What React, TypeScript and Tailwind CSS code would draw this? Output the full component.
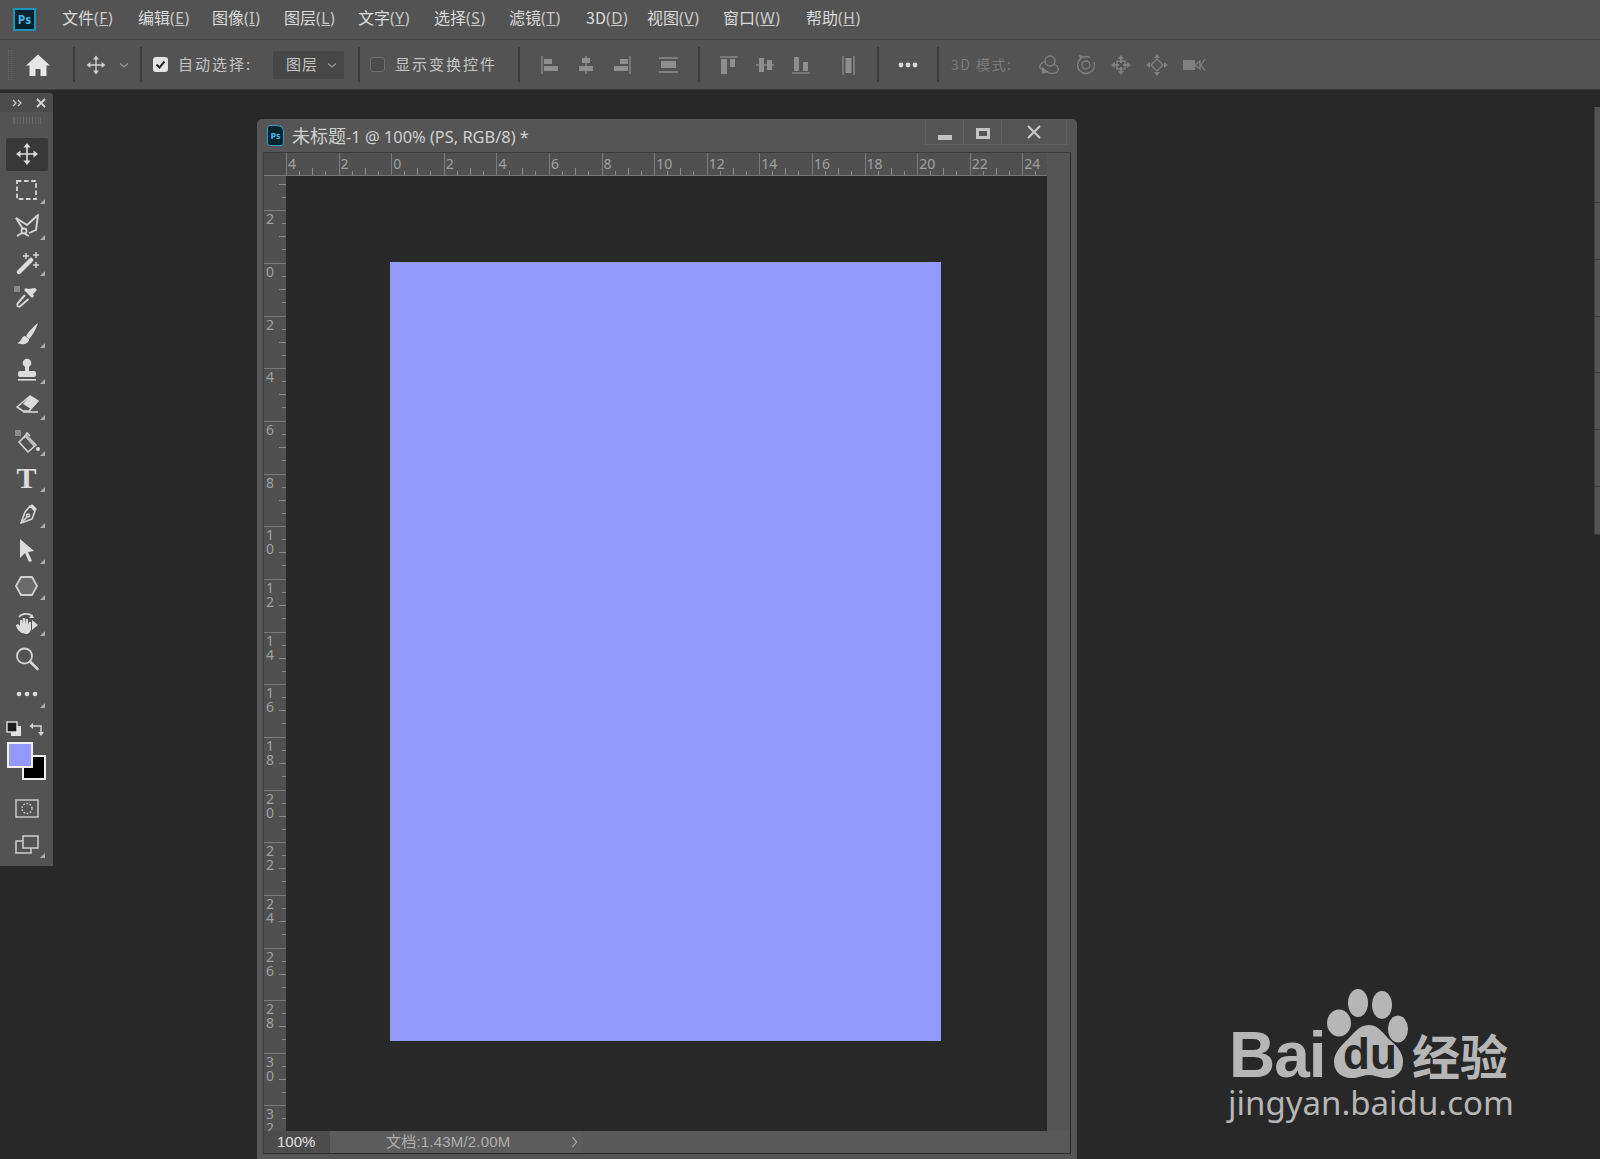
import React from "react";

const CJK = { fontFamily: '"Noto Sans CJK SC","Noto Sans",sans-serif' };
const LAT = { fontFamily: '"Noto Sans","Noto Sans CJK SC",sans-serif' };

const menus: [string, string, string][] = [
  ["文件", "F", "w-[76px]"],
  ["编辑", "E", "w-[74px]"],
  ["图像", "I", "w-[72px]"],
  ["图层", "L", "w-[74px]"],
  ["文字", "Y", "w-[76px]"],
  ["选择", "S", "w-[75px]"],
  ["滤镜", "T", "w-[77px]"],
  ["3D", "D", "w-[61px]"],
  ["视图", "V", "w-[76px]"],
  ["窗口", "W", "w-[83px]"],
  ["帮助", "H", "w-[70px]"],
];

const Ico = ({ children, s = 28, c = "#d6d6d6" }: { children: React.ReactNode; s?: number; c?: string }) => (
  <svg width={s} height={s} viewBox={`0 0 ${s} ${s}`} fill="none" stroke={c} strokeWidth={1.6} className="block shrink-0">
    {children}
  </svg>
);

const MoveGlyph = ({ c = "#dcdcdc" }: { c?: string }) => (
  <g>
    <path d="M14 6v16M6 14h16" stroke={c} strokeWidth={1.6} />
    <path d="M14 3l3.5 4.5h-7zM14 25l3.5-4.5h-7zM3 14l4.5-3.5v7zM25 14l-4.5-3.5v7z" fill={c} stroke="none" />
  </g>
);

const tools: { el: React.ReactNode; tri: boolean }[] = [
  { tri: false, el: <Ico><MoveGlyph /></Ico> },
  { tri: true, el: <Ico><rect x="4" y="5" width="19" height="18" strokeDasharray="4.500 2.600" strokeWidth={1.8} /></Ico> },
  { tri: true, el: <Ico><path d="M3 6l11 7L25 3l-2 15-7 3" strokeLinejoin="round" strokeWidth={1.900} /><path d="M3 6l7 11" strokeWidth={1.900} /><circle cx="11" cy="19" r="2.500" strokeWidth={1.800} /><path d="M9 21l-5 3M12 22l4 2" strokeWidth={1.800} /></Ico> },
  { tri: true, el: <Ico><path d="M6 24L18 12" stroke="#dcdcdc" strokeWidth={4.500} strokeLinecap="round" /><path d="M13 5v6M10 8h6M23 4v6M20 7h6M23 14v6M20 17h6" strokeWidth={1.500} /></Ico> },
  { tri: false, el: <Ico><path d="M24 4l2 2-4 4 1 2-2 2-8-8 2-2 2 1z" fill="#dcdcdc" stroke="none" transform="translate(-2 0)" /><path d="M12 11l-7 8c-2 2 0 5 2.500 3l8-7" strokeWidth={1.900} /><rect x="1" y="2" width="6" height="6" fill="#8a8a8a" stroke="none" /></Ico> },
  { tri: true, el: <Ico><path d="M25 3c-4 3-9 8-12 13l3 3c4-4 7-10 9-16z" fill="#dcdcdc" stroke="none" /><path d="M12 16c-4 0-3 6-8 7 4 2 12 2 12-4z" fill="#dcdcdc" stroke="none" /></Ico> },
  { tri: true, el: <Ico><circle cx="14" cy="7" r="4.300" fill="#dcdcdc" stroke="none" /><rect x="12" y="10" width="4" height="6" fill="#dcdcdc" stroke="none" /><rect x="5" y="15" width="18" height="6" rx="2" fill="#dcdcdc" stroke="none" /><rect x="5" y="23" width="18" height="1.600" fill="#dcdcdc" stroke="none" /></Ico> },
  { tri: true, el: <Ico><path d="M17 4l8 5-9 10H10l-6-4z" strokeLinejoin="round" /><path d="M17 4l8 5-7 8-8-5z" fill="#dcdcdc" stroke="none" /><path d="M10 20h15" /></Ico> },
  { tri: true, el: <Ico><path d="M13 7l10 10-8 7-9-10z" strokeLinejoin="round" /><path d="M11 10l3-5 3 3" /><path d="M13 7l10 10-2 2-9-10z" fill="#bbb" stroke="none" /><circle cx="25" cy="21" r="2" fill="#dcdcdc" stroke="none" /><rect x="2" y="2" width="6" height="6" fill="#8a8a8a" stroke="none" /></Ico> },
  { tri: true, el: <span className="block w-[28px] text-center text-[30px] leading-[28px] font-bold text-[#dcdcdc]" style={{ fontFamily: '"Liberation Serif",serif' }}>T</span> },
  { tri: true, el: <Ico><path d="M17 6l5 5-3 8-11 4 4-11z" strokeLinejoin="round" /><path d="M19 4l5 5-2 2-5-5z" fill="#dcdcdc" stroke="none" /><path d="M8 23l6-6" /><circle cx="15" cy="15.500" r="1.500" /></Ico> },
  { tri: true, el: <Ico><path d="M7 3l14 12-6 1 4 9-3 1-4-9-5 5z" fill="#dcdcdc" stroke="none" /></Ico> },
  { tri: true, el: <Ico><path d="M8 5h11l5 9-5 9H8l-5-9z" fill="#6b6b6b" stroke="#cfcfcf" strokeWidth={1.800} /></Ico> },
  { tri: true, el: <Ico><path d="M6 9c3-4 10-4 13-1" /><path d="M21 10l-5 0 3-4z" fill="#dcdcdc" stroke="none" /><path d="M19 12l6 5-6 5z" fill="#dcdcdc" stroke="none" /><path d="M9 25c-3-1-6-6-6-8l2-1 2 2v-6h2v4l1-6h2v6l1-5h2v6l1-3h2v7c0 3-3 5-5 5z" fill="#dcdcdc" stroke="none" /></Ico> },
  { tri: false, el: <Ico><circle cx="11.500" cy="12" r="7.500" strokeWidth={1.800} /><path d="M17 17.500L24.500 25" strokeWidth={2.600} strokeLinecap="round" /></Ico> },
  { tri: true, el: <Ico><circle cx="6" cy="14" r="2.300" fill="#dcdcdc" stroke="none" /><circle cx="14" cy="14" r="2.300" fill="#dcdcdc" stroke="none" /><circle cx="22" cy="14" r="2.300" fill="#dcdcdc" stroke="none" /></Ico> },
];

const G = "#8e8e8e";
const alignIcons: [React.ReactNode, string][] = [
  [<><path d="M4 3v18" /><rect x="6" y="6" width="8" height="5" fill={G} stroke="none" /><rect x="6" y="13" width="14" height="5" fill={G} stroke="none" /></>, "ml-[18px]"],
  [<><path d="M12 3v18" /><rect x="8" y="5" width="8" height="5" fill={G} stroke="none" /><rect x="5" y="13" width="14" height="5" fill={G} stroke="none" /></>, "ml-[12px]"],
  [<><path d="M20 3v18" /><rect x="10" y="6" width="8" height="5" fill={G} stroke="none" /><rect x="4" y="13" width="14" height="5" fill={G} stroke="none" /></>, "ml-[12px]"],
  [<><path d="M2 5h19M2 19h19" /><rect x="4" y="8" width="15" height="7" fill={G} stroke="none" /></>, "ml-[23px]"],
];
const alignIcons2: [React.ReactNode, string][] = [
  [<><path d="M3 4h18" /><rect x="4" y="6" width="6" height="15" fill={G} stroke="none" /><rect x="13" y="6" width="5" height="8" fill={G} stroke="none" /></>, "ml-[17px]"],
  [<><path d="M3 12h18" /><rect x="6" y="5" width="5" height="14" fill={G} stroke="none" /><rect x="14" y="7" width="5" height="10" fill={G} stroke="none" /></>, "ml-[12px]"],
  [<><path d="M3 20h18" /><rect x="5" y="4" width="5" height="14" fill={G} stroke="none" /><rect x="14" y="9" width="5" height="9" fill={G} stroke="none" /></>, "ml-[12px]"],
  [<><path d="M7 3v19M18 3v19" /><rect x="9.500" y="5" width="6" height="15" fill={G} stroke="none" /></>, "ml-[23px]"],
];

const D = "#808080";
const icons3d: [React.ReactNode, string][] = [
  [<><circle cx="13" cy="8" r="5" /><path d="M9 8c-4 1-7 4-6 7l4 3M10 19c3 2 9 2 11-1 1-3-1-6-4-7" /><path d="M5 14l7 5-7 2z" fill={D} stroke="none" /></>, "ml-[21px]"],
  [<><circle cx="12" cy="12" r="8.500" strokeDasharray="44 6" /><circle cx="12" cy="12" r="4" /><path d="M5 2l4 1-3 4z" fill={D} stroke="none" /></>, "ml-[13px]"],
  [<><path d="M12 2l3 4h-2v4h-2V6H9zM12 22l3-4h-2v-4h-2v4H9zM2 12l4-3v2h4v2H6v2zM22 12l-4-3v2h-4v2h4v2z" fill={D} stroke="none" /><rect x="8" y="8" width="8" height="8" /></>, "ml-[11px]"],
  [<><path d="M12 1l3 4H9zM12 23l3-4H9zM1 12l4-3v6zM23 12l-4-3v6z" fill={D} stroke="none" /><path d="M12 6l6 6-6 6-6-6z" /></>, "ml-[12px]"],
  [<><rect x="1" y="7" width="12" height="10" rx="1" fill={D} stroke="none" /><path d="M13 12l5-4v8zM23 6l-4 6 4 6" fill="none" /></>, "ml-[13px]"],
];

const topLabels = ["4", "2", "0", "2", "4", "6", "8", "10", "12", "14", "16", "18", "20", "22", "24"];
const sideLabels = ["", "2", "0", "2", "4", "6", "8", "10", "12", "14", "16", "18", "20", "22", "24", "26", "28", "30", "32"];
const sidePanelSegments = ["h-[96px]", "h-[57px]", "h-[57px]", "h-[56px]", "h-[57px]", "h-[57px]", "h-[48px]"];

const HCell = ({ t }: { t: string }) => (
  <div className="relative w-[52.6px] h-full shrink-0 border-l border-[#7b7b7b] pl-[1px] pt-[1px] text-[14px] leading-[20px] text-[#a0a0a0]" style={LAT}>
    {t}
    <svg width="52" height="9" className="absolute left-[-1px] bottom-0" stroke="#8a8a8a">
      <path d="M13.500 5v4M26.500 2v7M39.500 5v4" />
    </svg>
  </div>
);

const VCell = ({ t }: { t: string }) => (
  <div className="relative h-[52.67px] w-full shrink-0 border-t border-[#7b7b7b] pl-[2px] pt-[1px] text-[14px] leading-[14px] text-[#a0a0a0]" style={LAT}>
    {t.split("").map((d, i) => (
      <div key={i}>{d}</div>
    ))}
    <svg width="9" height="52" className="absolute right-0 top-[-1px]" stroke="#8a8a8a">
      <path d="M5 13.500h4M2 26.500h7M5 39.500h4" />
    </svg>
  </div>
);

export default function App() {
  return (
    <div className="relative w-[1600px] h-[1159px] overflow-hidden flex flex-col bg-[#282828]">
      {/* menu */}
      <div className="h-[39px] shrink-0 bg-[#535353] flex items-center pl-[13px] text-[#dadada]" style={CJK}>
        <div className="w-[23px] h-[23px] border-2 border-[#1f94ba] bg-[#06222f] flex items-center justify-center text-[12px] font-bold text-[#43bde4] leading-none mr-[26px]" style={LAT}>
          Ps
        </div>
        {menus.map(([n, k, w]) => (
          <span key={k} className={`${w} shrink-0 pb-[4px] text-[16px] leading-[20px] whitespace-nowrap`}>
            {n}
            <span className="text-[15.5px] tracking-[0.6px] text-[#c8c8c8]" style={LAT}>
              (<span className="underline">{k}</span>)
            </span>
          </span>
        ))}
      </div>
      {/* options */}
      <div className="h-[51px] shrink-0 bg-[#535353] border-t border-[#444444] border-b border-b-[#3c3c3c] flex items-center text-[#c4c4c4] text-[15px]" style={CJK}>
        <div className="ml-[8px] w-[4px] h-[30px] border-x border-dotted border-[#666666]" />
        <svg width="24" height="24" viewBox="0 0 24 24" className="ml-[14px] block shrink-0" fill="#e6e6e6">
          <path d="M12 1.500L24 12.500h-3.500V23H14.500v-7h-5v7H3.500V12.500H0z" />
        </svg>
        <div className="ml-[23px] w-[2px] h-[35px] bg-[#3d3d3d]" />
        <div className="ml-[9px]">
          <svg width="24" height="24" viewBox="0 0 28 28" className="block"><MoveGlyph c="#cfcfcf" /></svg>
        </div>
        <svg width="12" height="12" viewBox="0 0 12 12" className="ml-[10px] block" fill="none" stroke="#9a9a9a" strokeWidth="1.200">
          <path d="M2 4.500l4 3.500 4-3.500" />
        </svg>
        <div className="ml-[10px] w-[2px] h-[35px] bg-[#3d3d3d]" />
        <div className="ml-[11px] w-[15px] h-[15px] rounded-[3px] bg-[#e4e4e4] flex items-center justify-center">
          <svg width="11" height="11" viewBox="0 0 11 11" fill="none" stroke="#2b2b2b" strokeWidth="2">
            <path d="M1.500 5.500l3 3 5-6" />
          </svg>
        </div>
        <span className="ml-[10px] w-[74px] whitespace-nowrap text-[15px] tracking-[2px]">自动选择:</span>
        <div className="ml-[21px] w-[71px] h-[28px] rounded-[2px] bg-[#474747] flex items-center pl-[13px] text-[15px]">
          <span className="tracking-[1px]">图层</span>
          <svg width="12" height="12" viewBox="0 0 12 12" className="ml-[8px]" fill="none" stroke="#9a9a9a" strokeWidth="1.200">
            <path d="M2 4.500l4 3.500 4-3.500" />
          </svg>
        </div>
        <div className="ml-[14px] w-[2px] h-[35px] bg-[#3d3d3d]" />
        <div className="ml-[10px] w-[15px] h-[15px] rounded-[3px] bg-[#4b4b4b] border border-[#6f6f6f]" />
        <span className="ml-[10px] w-[100px] whitespace-nowrap text-[15px] tracking-[2px]">显示变换控件</span>
        <div className="ml-[23px] w-[2px] h-[35px] bg-[#3d3d3d]" />
        {alignIcons.map(([g, m], i) => (
          <svg key={i} width="24" height="24" viewBox="0 0 24 24" className={`${m} block shrink-0`} fill="none" stroke={G} strokeWidth="1.300">{g}</svg>
        ))}
        <div className="ml-[17px] w-[2px] h-[35px] bg-[#3d3d3d]" />
        {alignIcons2.map(([g, m], i) => (
          <svg key={i} width="24" height="24" viewBox="0 0 24 24" className={`${m} block shrink-0`} fill="none" stroke={G} strokeWidth="1.300">{g}</svg>
        ))}
        <div className="ml-[17px] w-[2px] h-[35px] bg-[#3d3d3d]" />
        <svg width="24" height="24" viewBox="0 0 24 24" className="ml-[17px] block shrink-0" fill="#d8d8d8">
          <circle cx="5" cy="12" r="2.400" />
          <circle cx="12" cy="12" r="2.400" />
          <circle cx="19" cy="12" r="2.400" />
        </svg>
        <div className="ml-[17px] w-[2px] h-[35px] bg-[#3d3d3d]" />
        <span className="ml-[12px] w-[65px] whitespace-nowrap text-[14px] tracking-[1.500px] text-[#7a7a7a]">3D 模式:</span>
        {icons3d.map(([g, m], i) => (
          <svg key={i} width="24" height="24" viewBox="0 0 24 24" className={`${m} block shrink-0`} fill="none" stroke={D} strokeWidth="1.300">{g}</svg>
        ))}
      </div>
      {/* main */}
      <div className="flex-1 flex min-h-0">
        {/* tool panel */}
        <div className="w-[53px] h-[773px] mt-[3px] shrink-0 bg-[#535353] rounded-tr-[4px] flex flex-col items-center">
          <div className="w-full h-[19px] shrink-0 bg-[#4c4c4c] rounded-tr-[4px] flex items-center justify-between pl-[12px] pr-[7px]">
            <svg width="10" height="8" viewBox="0 0 10 8" fill="none" stroke="#cccccc" strokeWidth="1.200">
              <path d="M1 1l3 3-3 3M6 1l3 3-3 3" />
            </svg>
            <svg width="10" height="10" viewBox="0 0 10 10" fill="none" stroke="#d6d6d6" strokeWidth="1.800">
              <path d="M1 1l8 8M9 1l-8 8" />
            </svg>
          </div>
          <div className="mt-[5px] mb-[12px] w-[28px] h-[7px] shrink-0 border-x border-[#666666] bg-[repeating-linear-gradient(90deg,#666666_0,#666666_1px,transparent_1px,transparent_3px)]" />
          {tools.map((t, i) => (
            <div key={i} className={`relative w-[42px] shrink-0 flex items-center justify-center ${i === 0 ? "bg-[#383838] rounded-[2px] h-[33px] my-[1.5px]" : "h-[36px]"}`}>
              {t.el}
              {t.tri && <span className="absolute right-[3px] bottom-[4px] w-0 h-0 border-l-[5px] border-l-transparent border-b-[5px] border-b-[#b0b0b0]" />}
            </div>
          ))}
          <div className="mt-[8px] w-full h-[18px] shrink-0 flex items-center pl-[6px] gap-[6px]">
            <svg width="16" height="16" viewBox="0 0 16 16">
              <rect x="5" y="5" width="10" height="10" fill="#e0e0e0" />
              <rect x="1" y="1" width="10" height="10" fill="#1a1a1a" stroke="#e0e0e0" strokeWidth="1.400" />
            </svg>
            <svg width="16" height="16" viewBox="0 0 16 16" fill="none" stroke="#d8d8d8" strokeWidth="1.400">
              <path d="M3 5h10v8" />
              <path d="M5 2L1.500 5 5 8zM10 11l3 4 3-4z" fill="#d8d8d8" stroke="none" />
            </svg>
          </div>
          <div className="relative w-full h-[40px] mt-[4px] shrink-0">
            <div className="absolute left-[22px] top-[13px] w-[24px] h-[25px] bg-black border-2 border-[#f0f0f0]" />
            <div className="absolute left-[7px] top-0 w-[26px] h-[26px] bg-[#9299fb] border-2 border-[#f0f0f0]" />
          </div>
          <div className="mt-[13px] shrink-0 w-[28px] h-[28px] flex items-center justify-center">
            <svg width="24" height="20" viewBox="0 0 24 20" fill="none" stroke="#d0d0d0" strokeWidth="1.400">
              <rect x="1" y="1" width="22" height="17" />
              <circle cx="12" cy="9.500" r="5" strokeDasharray="1.600 1.600" />
            </svg>
          </div>
          <div className="mt-[8px] shrink-0 relative w-[42px] h-[28px] flex items-center justify-center">
            <svg width="24" height="20" viewBox="0 0 24 20" fill="none" stroke="#d0d0d0" strokeWidth="1.500">
              <rect x="1" y="6" width="15" height="12" />
              <rect x="8" y="1" width="15" height="12" fill="#535353" />
            </svg>
            <span className="absolute right-[3px] bottom-[1px] w-0 h-0 border-l-[5px] border-l-transparent border-b-[5px] border-b-[#b0b0b0]" />
          </div>
        </div>
        {/* document window */}
        <div className="ml-[204px] mt-[29px] w-[820px] h-[1040px] shrink-0 rounded-t-[5px] bg-[#555555] px-[6px] flex flex-col">
          <div className="relative h-[33px] shrink-0 flex items-center">
            <div className="ml-[4px] w-[17px] h-[21px] rounded-[3px] rounded-tr-[7px] border border-[#2aa3c9] bg-[#06222f] flex items-center justify-center text-[9px] font-bold text-[#43bde4] leading-none" style={LAT}>
              Ps
            </div>
            <span className="ml-[8px] whitespace-nowrap text-[16.4px] text-[#d0d0d0]" style={LAT}>
              <span className="text-[18px]" style={CJK}>未标题</span>-1 @ 100% (PS, RGB/8) *
            </span>
            <div className="absolute right-[4px] top-0 w-[142px] h-[26px] flex border border-t-0 border-[#606060]">
              <div className="w-[38px] h-full border-r border-[#606060] flex items-end justify-center pb-[4px]">
                <div className="w-[14px] h-[5px] bg-[#c4c4c4]" />
              </div>
              <div className="w-[38px] h-full border-r border-[#606060] flex items-center justify-center pt-[3px]">
                <div className="w-[14px] h-[11px] border-[3px] border-[#c4c4c4]" />
              </div>
              <div className="flex-1 flex items-center justify-center">
                <svg width="14" height="14" viewBox="0 0 14 14" fill="none" stroke="#c8c8c8" strokeWidth="2.200">
                  <path d="M1 1l12 12M13 1L1 13" />
                </svg>
              </div>
            </div>
          </div>
          <div className="w-[808px] h-[1002px] shrink-0 border-t border-l border-t-[#3a3a3a] border-l-[#3a3a3a] border-r border-b border-r-[#2b2b2b] border-b-[#2b2b2b] flex flex-col">
            {/* top ruler */}
            <div className="h-[23px] shrink-0 flex bg-[#505050] border-b border-[#777777]">
              <div className="w-[22px] shrink-0 bg-[#4b4b4b]" />
              <div className="w-[761px] flex overflow-hidden">
                {topLabels.map((t, i) => (
                  <HCell key={i} t={t} />
                ))}
              </div>
              <div className="flex-1 bg-[#555555] -mb-[1px]" />
            </div>
            {/* middle */}
            <div className="flex-1 min-h-0 flex">
              <div className="w-[22px] shrink-0 overflow-hidden bg-[#505050]">
                <div className="-mt-[18.33px]">
                  {sideLabels.map((t, i) => (
                    <VCell key={i} t={t} />
                  ))}
                </div>
              </div>
              <div className="w-[761px] shrink-0 bg-[#282828] pl-[104px] pt-[86px]">
                <div className="w-[551px] h-[779px] bg-[#9299fb]" />
              </div>
              <div className="flex-1 bg-[#555555]" />
            </div>
            {/* status */}
            <div className="h-[22px] shrink-0 flex items-center bg-[#585858]">
              <div className="w-[66px] h-full bg-[#4c4c4c] pl-[13px] text-[15px] leading-[22px] text-[#e2e2e2]" style={{ fontFamily: '"Liberation Sans",sans-serif' }}>
                100%
              </div>
              <div className="w-[253px] h-full bg-[#5c5c5c] flex items-center pl-[56px] text-[15px] text-[#aeaeae]" style={{ fontFamily: '"Liberation Sans","Noto Sans CJK SC",sans-serif' }}>
                <span className="whitespace-nowrap tracking-[0.2px]">文档:1.43M/2.00M</span>
                <svg width="8" height="14" viewBox="0 0 8 14" className="ml-[60px]" fill="none" stroke="#b0b0b0" strokeWidth="1.200">
                  <path d="M1.500 2l4 5-4 5" />
                </svg>
              </div>
            </div>
          </div>
        </div>
        {/* right panel sliver */}
        <div className="ml-auto w-[6px] mt-[17px] h-[428px] shrink-0 bg-[#535353] border-l border-[#3c3c3c] flex flex-col">
          {sidePanelSegments.map((h, i) => (
            <div key={i} className={`${h} shrink-0 border-b border-[#3c3c3c]`} />
          ))}
        </div>
      </div>
      {/* watermark */}
      <div className="absolute left-[1226px] top-[985px] w-[296px] h-[140px] text-[#b6b6b6]">
        <svg width="90" height="100" viewBox="0 0 90 100" className="absolute left-[100px] top-0" fill="#b6b6b6">
          <ellipse cx="13" cy="38" rx="12" ry="13.500" />
          <ellipse cx="32" cy="18" rx="10" ry="14" />
          <ellipse cx="56" cy="20" rx="10" ry="14" />
          <ellipse cx="72" cy="44" rx="10" ry="13.500" />
          <path d="M43 40c10 0 14 9 22 16 8 7 12 13 12 21 0 12-10 17-20 16-5-1-9-3-14-3s-9 2-14 3c-10 1-21-4-21-16 0-8 5-14 12-21 8-7 12-16 23-16z" />
          <text x="44" y="84" textAnchor="middle" fontSize="44" fontWeight="700" fill="#282828" style={{ fontFamily: '"Liberation Sans",sans-serif' }}>du</text>
        </svg>
        <span className="absolute left-[3px] top-[33px] text-[64px] leading-[74px] font-bold tracking-[-1px]" style={{ fontFamily: '"Liberation Sans",sans-serif' }}>Bai</span>
        <span className="absolute left-[186px] top-[35px] text-[48px] leading-[68px] font-bold whitespace-nowrap" style={CJK}>经验</span>
        <span className="absolute left-[2px] top-[98px] text-[33px] leading-[40px] whitespace-nowrap" style={LAT}>jingyan.baidu.com</span>
      </div>
    </div>
  );
}
